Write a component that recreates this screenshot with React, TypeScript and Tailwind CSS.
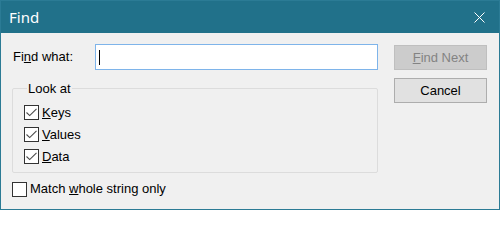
function CheckBox({ checked }: { checked?: boolean }) {
  return (
    <span className="w-[15px] h-[15px] border border-[#333333] bg-white shrink-0 relative">
      {checked && (
        <svg className="absolute left-0 top-0" width="13" height="13" viewBox="0 0 13 13">
          <path d="M1.5 6.5 L4.7 9.6 L11.5 2.8" fill="none" stroke="#4a4a4a" strokeWidth="1.1" />
        </svg>
      )}
    </span>
  );
}

function CheckRow({ label, checked }: { label: React.ReactNode; checked?: boolean }) {
  return (
    <div className="flex items-center gap-[3px] h-[22px]">
      <CheckBox checked={checked} />
      <span>{label}</span>
    </div>
  );
}

export default function App() {
  return (
    <div className="w-[500px] h-[210px] flex flex-col border border-[#2b7b95] bg-[#f0f0f0] font-['Liberation_Sans',Arial,sans-serif] text-[13px] text-black">
      <div className="h-[32px] shrink-0 bg-[#21718a] flex items-center justify-between pl-[8px] pr-[14px] text-white">
        <span className="font-['Noto_Sans',sans-serif] text-[15px]">Find</span>
        <svg width="11" height="11" viewBox="0 0 11 11">
          <path d="M0.5 0.5 L10.5 10.5 M10.5 0.5 L0.5 10.5" stroke="white" strokeWidth="1" />
        </svg>
      </div>

      <div className="flex flex-1 pl-[11px] pt-[11px] gap-[16px]">
        <div className="w-[366px] flex flex-col">
          <div className="flex items-center h-[26px]">
            <span className="ml-px">
              Fi<u>n</u>d what:
            </span>
            <div className="ml-auto w-[283px] h-[26px] border border-[#7eb4ea] bg-white flex items-center pl-[3px]">
              <span className="w-px h-[15px] bg-black" />
            </div>
          </div>

          <fieldset className="mt-[9px] h-[94px] border border-[#dcdcdc] rounded-[2px] pl-[11px] pt-[3px]">
            <legend className="ml-[3px] px-[1px]">Look at</legend>
            <CheckRow checked label={<><u>K</u>eys</>} />
            <CheckRow checked label={<><u>V</u>alues</>} />
            <CheckRow checked label={<><u>D</u>ata</>} />
          </fieldset>

          <div className="mt-[5px]">
            <CheckRow label={<>Match <u>w</u>hole string only</>} />
          </div>
        </div>

        <div className="w-[93px] flex flex-col gap-[8px] pt-px">
          <button className="h-[25px] border border-[#bfbfbf] bg-[#cccccc] text-[#838383]">
            <u>F</u>ind Next
          </button>
          <button className="h-[25px] border border-[#adadad] bg-[#e1e1e1]">Cancel</button>
        </div>
      </div>
    </div>
  );
}
